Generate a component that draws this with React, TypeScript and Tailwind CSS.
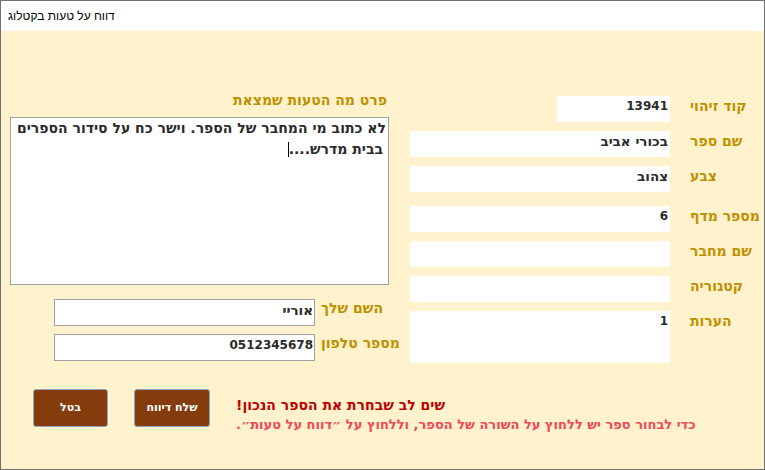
import React from 'react';

const LABEL = 'text-[#bf9000] font-bold text-[14px] leading-[16px] whitespace-nowrap';
const VALUE = 'text-[#2b2b2b] font-bold leading-[20px] text-right whitespace-nowrap';

interface FieldProps {
  label:    string;
  value?:   string;
  numeric?: boolean;
  short?:   boolean;
  tall?:    boolean;
  mt:       string;
}

// one row on the right side: white box, then the label
const Field: React.FC<FieldProps> = ({ label, value = '', numeric = false, short = false, tall = false, mt }) => (
  <div className={`flex ${mt}`}>
    <div className="w-[260px] flex justify-end shrink-0">
      <div
        dir="rtl"
        className={`${short ? 'w-[113px]' : 'w-[260px]'} ${tall ? 'h-[52px]' : 'h-[26px]'} bg-white pr-[2px] ${VALUE} ${numeric ? 'text-[12px]' : 'text-[13.5px]'}`}
      >
        {value}
      </div>
    </div>
    <div dir="rtl" className={`ml-[20px] pt-[2px] text-left ${LABEL}`}>{label}</div>
  </div>
);

const SmallInput: React.FC<{ label: string; value: string; numeric?: boolean; mt: string }> = ({ label, value, numeric = false, mt }) => (
  <div className={`flex items-start ${mt}`}>
    <div
      dir="rtl"
      className={`ml-[44px] w-[261px] h-[27px] shrink-0 bg-white border border-[#a0a0a0] pr-px leading-[19px] ${VALUE} ${numeric ? 'text-[12px]' : 'text-[13.5px]'}`}
    >
      {value}
    </div>
    <div dir="rtl" className={`ml-[6px] pt-[1px] ${LABEL}`}>{label}</div>
  </div>
);

export default function App() {
  return (
    <div
      className="w-[765px] h-[470px] border border-[#6f6f6f] flex flex-col bg-[#fff2cc] overflow-hidden"
      style={{ fontFamily: '"DejaVu Sans", "Liberation Sans", sans-serif' }}
    >
      {/* title bar */}
      <div className="h-[30px] bg-white flex items-center pl-[7px] shrink-0">
        <span dir="rtl" className="text-[12px] text-black" style={{ fontFamily: '"Liberation Sans", "DejaVu Sans", sans-serif' }}>
          דווח על טעות בקטלוג
        </span>
      </div>

      <div className="flex-1 flex flex-col">
        {/* form */}
        <div className="flex pt-[59px]">
          {/* left: description, name, phone */}
          <div className="ml-[9px] w-[379px] shrink-0 flex flex-col">
            <div dir="rtl" className="pr-[2px] h-[20px] text-[#bf9000] font-bold text-[14px] leading-[20px]">
              פרט מה הטעות שמצאת
            </div>
            <div
              dir="rtl"
              className="mt-[7px] h-[168px] bg-white border border-[#a0a0a0] pr-[2px] text-[#2b2b2b] font-bold text-[14px] leading-[21px] whitespace-nowrap"
            >
              <div>לא כתוב מי המחבר של הספר. וישר כח על סידור הספרים</div>
              <div className="pr-[3px] flex items-center">
                <span>בבית מדרש....</span>
                <span className="inline-block w-px h-[15px] bg-black" />
              </div>
            </div>
            <SmallInput label="השם שלך" value="אוריי" mt="mt-[14px]" />
            <SmallInput label="מספר טלפון" value="0512345678" numeric mt="mt-[8px]" />
          </div>

          {/* right: catalogue details */}
          <div className="ml-[21px] pt-[6px] flex flex-col">
            <Field label="קוד זיהוי" value="13941" numeric short mt="mt-0" />
            <Field label="שם ספר" value="בכורי אביב" mt="mt-[9px]" />
            <Field label="צבע" value="צהוב" mt="mt-[9px]" />
            <Field label="מספר מדף" value="6" numeric mt="mt-[14px]" />
            <Field label="שם מחבר" mt="mt-[9px]" />
            <Field label="קטגוריה" mt="mt-[9px]" />
            <Field label="הערות" value="1" numeric tall mt="mt-[9px]" />
          </div>
        </div>

        {/* buttons and warning */}
        <div className="flex items-start mt-[26px] pl-[32px]">
          <button className="w-[75px] h-[38px] shrink-0 bg-[#843c0c] border border-[#8fa6c4] rounded-[3px] text-white font-bold text-[11px]">
            בטל
          </button>
          <button className="ml-[26px] w-[76px] h-[38px] shrink-0 bg-[#843c0c] border border-[#8fa6c4] rounded-[3px] text-white font-bold text-[11px]">
            שלח דיווח
          </button>
          <div className="ml-[26px] mt-[7px] flex flex-col items-start whitespace-nowrap">
            <div dir="rtl" className="text-[#c00000] font-bold text-[14px] leading-[19px]">
              שים לב שבחרת את הספר הנכון!
            </div>
            <div dir="rtl" className="text-[#f0475a] font-bold text-[13px] leading-[19px]">
              כדי לבחור ספר יש ללחוץ על השורה של הספר, וללחוץ על ״דווח על טעות״.
            </div>
          </div>
        </div>
      </div>
    </div>
  );
}
